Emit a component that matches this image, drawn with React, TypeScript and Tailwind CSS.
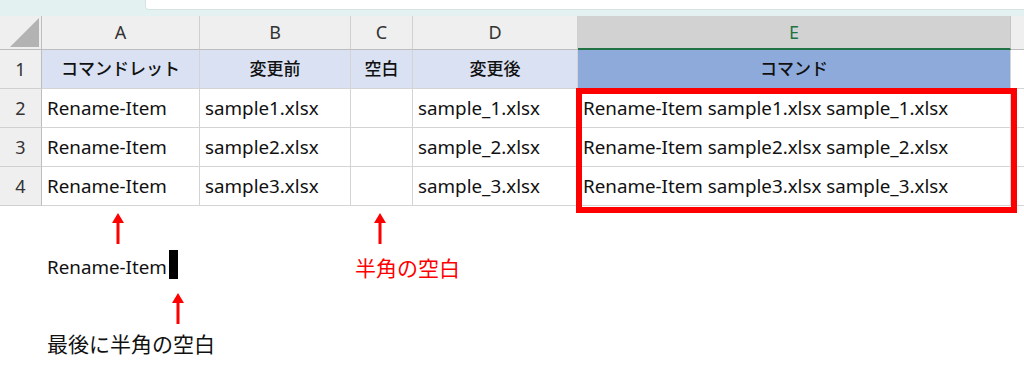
import type { ReactNode } from 'react';

const font = { fontFamily: '"Noto Sans", "Noto Sans CJK JP", sans-serif' };

const cols = ['A', 'B', 'C', 'D', 'E'];

const rows = [
  ['Rename-Item', 'sample1.xlsx', '', 'sample_1.xlsx', 'Rename-Item sample1.xlsx sample_1.xlsx'],
  ['Rename-Item', 'sample2.xlsx', '', 'sample_2.xlsx', 'Rename-Item sample2.xlsx sample_2.xlsx'],
  ['Rename-Item', 'sample3.xlsx', '', 'sample_3.xlsx', 'Rename-Item sample3.xlsx sample_3.xlsx'],
];

function Arrow() {
  return (
    <svg width="14" height="31" viewBox="0 0 14 31">
      <polygon points="7,0 13,10 1,10" fill="#ff0000" />
      <rect x="5.5" y="8" width="3" height="23" fill="#ff0000" />
    </svg>
  );
}

function Cell({ children, className = '' }: { children?: ReactNode; className?: string }) {
  return (
    <div className={`flex items-center border-r border-b border-[#d4d4d4] px-[5px] whitespace-nowrap overflow-hidden ${className}`}>
      {children}
    </div>
  );
}

export default function App() {
  return (
    <div className="w-[1024px] h-[367px] bg-white overflow-hidden text-[#111] text-[17px]" style={font}>
      {/* formula bar strip */}
      <div className="h-[16px] bg-[#e4f1f1] flex">
        <div className="ml-[145px] h-[10px] flex-1 bg-white rounded-bl-[4px] border-l border-b border-[#d6e3e3]" />
      </div>

      <div className="relative">
        <div className="grid grid-cols-[42px_158px_151px_62px_165px_433px_1fr] grid-rows-[34px_39px_39px_39px_39px]">
          {/* column headers */}
          <div className="relative bg-[#efefef] border-r border-b border-[#bdbdbd]">
            <svg className="absolute right-[2px] bottom-[2px]" width="29" height="29" viewBox="0 0 29 29">
              <polygon points="29,0 29,29 0,29" fill="#b3b3b3" />
            </svg>
          </div>
          {cols.map((c) =>
            c === 'E' ? (
              <div
                key={c}
                className="flex items-center justify-center bg-[#d2d2d2] border-b-2 border-[#217346] border-r border-r-[#c4c4c4] text-[#217346] text-[18px]"
              >
                {c}
              </div>
            ) : (
              <div
                key={c}
                className="flex items-center justify-center bg-[#efefef] border-r border-b border-[#d0d0d0] border-b-[#bdbdbd] text-[#333] text-[18px]"
              >
                {c}
              </div>
            )
          )}
          <div className="bg-[#efefef] border-b border-[#bdbdbd]" />

          {/* row 1 */}
          <div className="flex items-center justify-center bg-[#efefef] border-r border-b border-[#bdbdbd] border-b-[#d0d0d0] text-[#333] text-[18px]">
            1
          </div>
          {['コマンドレット', '変更前', '空白', '変更後'].map((t) => (
            <Cell key={t} className="justify-center bg-[#d9e1f2] font-medium">
              {t}
            </Cell>
          ))}
          <Cell className="justify-center bg-[#8eaadb] font-medium">コマンド</Cell>
          <Cell className="border-r-0" />

          {/* data rows */}
          {rows.map((r, i) => (
            <div key={i} className="contents">
              <div className="flex items-center justify-center bg-[#efefef] border-r border-b border-[#bdbdbd] border-b-[#d0d0d0] text-[#333] text-[18px]">
                {i + 2}
              </div>
              {r.map((v, j) => (
                <Cell key={j} className="text-[18.8px]">{v}</Cell>
              ))}
              <Cell className="border-r-0" />
            </div>
          ))}
        </div>

        {/* highlight box */}
        <div className="absolute left-[576px] top-[72px] w-[441px] h-[125px] border-[6px] border-[#ff0000]" />
      </div>

      {/* annotations */}
      <div className="flex pt-[7px]">
        <div className="w-[300px] flex flex-col">
          <div className="ml-[111px]">
            <Arrow />
          </div>
          <div className="ml-[47px] mt-[4px] flex items-end h-[31px]">
            <span className="leading-none pb-[2px] text-[18.8px]">Rename-Item</span>
            <span className="ml-[2px] w-[9px] h-[29px] bg-black" />
          </div>
          <div className="ml-[171px] mt-[14px]">
            <Arrow />
          </div>
          <div className="ml-[47px] mt-[10px] text-[21px] leading-none">最後に半角の空白</div>
        </div>
        <div className="flex flex-col">
          <div className="ml-[73px]">
            <Arrow />
          </div>
          <div className="ml-[55px] mt-[14px] text-[21px] leading-none text-[#ff0000]">半角の空白</div>
        </div>
      </div>
    </div>
  );
}
